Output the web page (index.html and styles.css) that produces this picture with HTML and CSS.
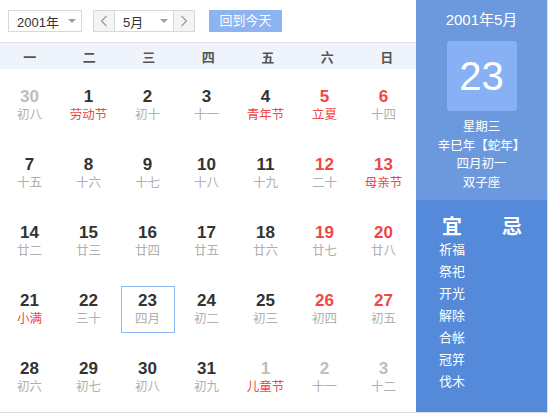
FILE: index.html
```html
<!DOCTYPE html>
<html lang="zh-CN">
<head>
<meta charset="utf-8">
<title>万年历</title>
<link rel="stylesheet" href="styles.css">
</head>
<body>
<div class="cal">
  <div class="main">
    <div class="toolbar">
      <div class="select year"><span>2001年</span><i class="caret"></i></div>
      <div class="month-group">
        <div class="nav"><svg width="8" height="12" viewBox="0 0 8 12"><path d="M6.5 1 L1.5 6 L6.5 11" fill="none" stroke="#9a9a9a" stroke-width="1.2"/></svg></div>
        <div class="select month"><span>5月</span><i class="caret"></i></div>
        <div class="nav"><svg width="8" height="12" viewBox="0 0 8 12"><path d="M1.5 1 L6.5 6 L1.5 11" fill="none" stroke="#9a9a9a" stroke-width="1.2"/></svg></div>
      </div>
      <div class="today-btn">回到今天</div>
    </div>
    <div class="week">
      <span>一</span><span>二</span><span>三</span><span>四</span><span>五</span><span>六</span><span>日</span>
    </div>
    <div class="grid">
      <div class="cell other"><div class="box"><b>30</b><em>初八</em></div></div>
      <div class="cell"><div class="box"><b>1</b><em class="fest">劳动节</em></div></div>
      <div class="cell"><div class="box"><b>2</b><em>初十</em></div></div>
      <div class="cell"><div class="box"><b>3</b><em>十一</em></div></div>
      <div class="cell"><div class="box"><b>4</b><em class="fest">青年节</em></div></div>
      <div class="cell wkend"><div class="box"><b>5</b><em class="fest">立夏</em></div></div>
      <div class="cell wkend"><div class="box"><b>6</b><em>十四</em></div></div>

      <div class="cell"><div class="box"><b>7</b><em>十五</em></div></div>
      <div class="cell"><div class="box"><b>8</b><em>十六</em></div></div>
      <div class="cell"><div class="box"><b>9</b><em>十七</em></div></div>
      <div class="cell"><div class="box"><b>10</b><em>十八</em></div></div>
      <div class="cell"><div class="box"><b>11</b><em>十九</em></div></div>
      <div class="cell wkend"><div class="box"><b>12</b><em>二十</em></div></div>
      <div class="cell wkend"><div class="box"><b>13</b><em class="fest">母亲节</em></div></div>

      <div class="cell"><div class="box"><b>14</b><em>廿二</em></div></div>
      <div class="cell"><div class="box"><b>15</b><em>廿三</em></div></div>
      <div class="cell"><div class="box"><b>16</b><em>廿四</em></div></div>
      <div class="cell"><div class="box"><b>17</b><em>廿五</em></div></div>
      <div class="cell"><div class="box"><b>18</b><em>廿六</em></div></div>
      <div class="cell wkend"><div class="box"><b>19</b><em>廿七</em></div></div>
      <div class="cell wkend"><div class="box"><b>20</b><em>廿八</em></div></div>

      <div class="cell"><div class="box"><b>21</b><em class="fest">小满</em></div></div>
      <div class="cell"><div class="box"><b>22</b><em>三十</em></div></div>
      <div class="cell sel"><div class="box"><b>23</b><em>四月</em></div></div>
      <div class="cell"><div class="box"><b>24</b><em>初二</em></div></div>
      <div class="cell"><div class="box"><b>25</b><em>初三</em></div></div>
      <div class="cell wkend"><div class="box"><b>26</b><em>初四</em></div></div>
      <div class="cell wkend"><div class="box"><b>27</b><em>初五</em></div></div>

      <div class="cell"><div class="box"><b>28</b><em>初六</em></div></div>
      <div class="cell"><div class="box"><b>29</b><em>初七</em></div></div>
      <div class="cell"><div class="box"><b>30</b><em>初八</em></div></div>
      <div class="cell"><div class="box"><b>31</b><em>初九</em></div></div>
      <div class="cell other"><div class="box"><b>1</b><em class="fest">儿童节</em></div></div>
      <div class="cell other"><div class="box"><b>2</b><em>十一</em></div></div>
      <div class="cell other"><div class="box"><b>3</b><em>十二</em></div></div>
    </div>
  </div>
  <div class="side">
    <div class="side-top">
      <div class="ym">2001年5月</div>
      <div class="bigday">23</div>
      <div class="info">
        <div>星期三</div>
        <div>辛巳年【蛇年】</div>
        <div>四月初一</div>
        <div>双子座</div>
      </div>
    </div>
    <div class="side-bottom">
      <div class="col">
        <div class="ttl">宜</div>
        <div class="item">祈福</div>
        <div class="item">祭祀</div>
        <div class="item">开光</div>
        <div class="item">解除</div>
        <div class="item">合帐</div>
        <div class="item">冠笄</div>
        <div class="item">伐木</div>
      </div>
      <div class="col">
        <div class="ttl">忌</div>
      </div>
    </div>
  </div>
</div>
</body>
</html>
```
FILE: styles.css
```css
* { box-sizing: border-box; }
html, body { margin: 0; padding: 0; background: #fff; }
body {
  font-family: "Liberation Sans", "Noto Sans CJK SC", sans-serif;
  font-size: 13px;
  color: #333;
}
.cal {
  display: flex;
  width: 548px;
  height: 413px;
  border-right: 1px solid #dcdce6;
  border-bottom: 1px solid #dddddd;
}
.main {
  width: 416px;
  display: flex;
  flex-direction: column;
}
.toolbar {
  height: 43px;
  border-bottom: 1px solid #e2e2e2;
  display: flex;
  align-items: flex-start;
  padding: 10px 0 0 8px;
}
.select {
  height: 22px;
  border: 1px solid #d8d8d8;
  background: #fff;
  display: flex;
  align-items: center;
  justify-content: space-between;
  font-size: 13px;
  color: #333;
}
.select.year { width: 74px; padding: 0 3px 0 8px; }
.select.month { width: 58px; padding: 0 3px 0 8px; border-left: none; border-right: none; }
.caret {
  width: 0; height: 0;
  border-left: 4px solid transparent;
  border-right: 4px solid transparent;
  border-top: 4px solid #a0a0a0;
  margin-right: 2px;
}
.month-group { display: flex; margin-left: 11px; }
.nav {
  width: 22px; height: 22px;
  border: 1px solid #d8d8d8;
  background: #f4f4f4;
  display: flex; align-items: center; justify-content: center;
}
.today-btn {
  margin-left: 14px;
  width: 73px; height: 22px;
  background: #8db4f0;
  color: #fff;
  font-size: 13px;
  line-height: 22px;
  text-align: center;
}
.week {
  height: 26px;
  background: #eff4fc;
  display: grid;
  grid-template-columns: repeat(7, 59.5px);
  align-items: center;
  font-weight: bold;
  color: #555;
  font-size: 13px;
}
.week span { text-align: center; }
.grid {
  display: grid;
  grid-template-columns: repeat(7, 59px);
  grid-auto-rows: 68px;
}
.cell { display: flex; justify-content: center; }
.box {
  margin-top: 13px;
  width: 54px; height: 47px;
  border: 1px solid transparent;
  display: flex; flex-direction: column; align-items: center;
  padding-top: 4px;
}
.box b {
  font-size: 17px;
  line-height: 20px;
  font-weight: bold;
  color: #333;
}
.box em {
  font-style: normal;
  font-size: 12.5px;
  line-height: 17px;
  color: #b0b0b0;
}
.box em.fest { color: #f04646; }
.wkend .box b { color: #f04646; }
.other .box b { color: #bdbdbd; }
.sel .box { border-color: #8fb7f5; }
.side {
  width: 131px;
  display: flex;
  flex-direction: column;
  color: #fff;
}
.side-top {
  height: 200px;
  background: #6c99dd;
  display: flex; flex-direction: column; align-items: center;
  padding-top: 11px;
}
.ym { font-size: 15px; line-height: 18px; }
.bigday {
  margin-top: 12px;
  width: 70px; height: 70px;
  background: #87b1f4;
  border-radius: 3px;
  font-size: 40px;
  line-height: 70px;
  text-align: center;
}
.info {
  margin-top: 7px;
  text-align: center;
  font-size: 12.5px;
  line-height: 18.5px;
}
.side-bottom {
  flex: 1;
  background: #5589da;
  display: flex;
  padding: 15px 0 0 6px;
}
.col { width: 60px; display: flex; flex-direction: column; align-items: center; }
.ttl { font-size: 20px; font-weight: bold; line-height: 24px; }
.item { font-size: 13px; line-height: 22px; }
```
